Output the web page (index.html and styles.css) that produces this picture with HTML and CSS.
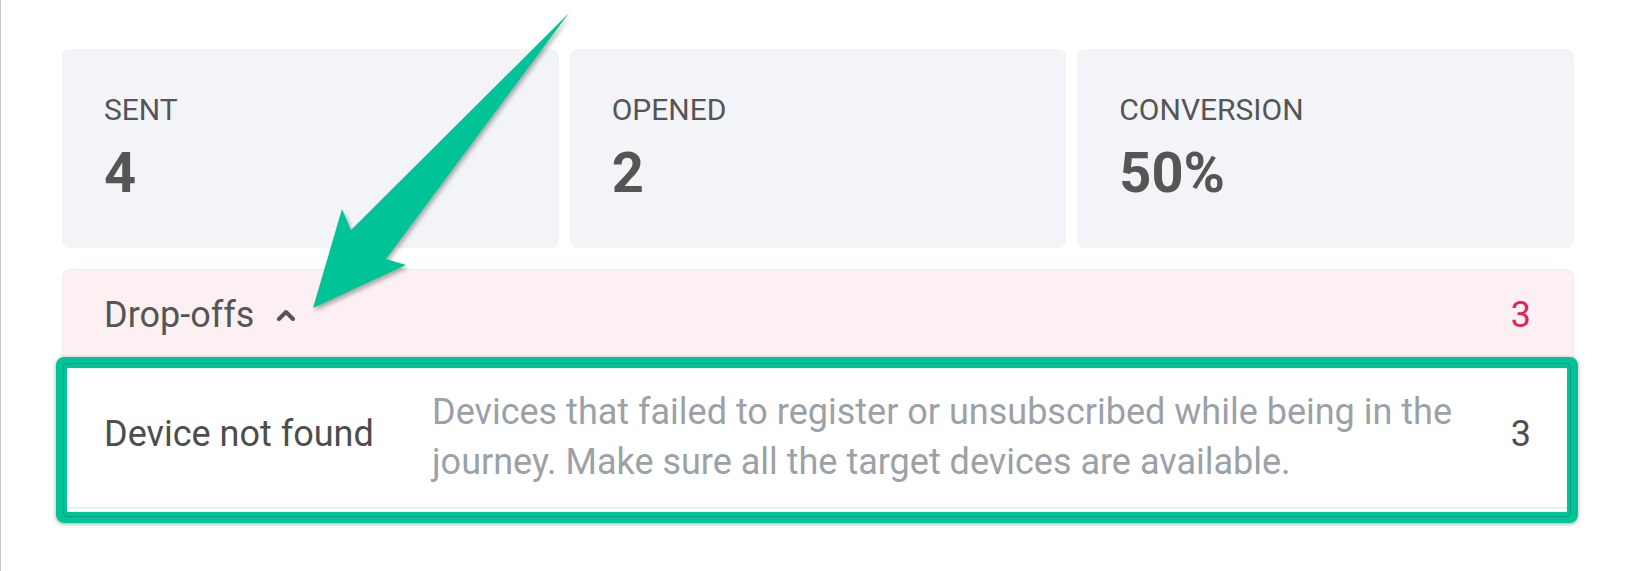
FILE: index.html
```html
<!DOCTYPE html>
<html lang="en">
<head>
    <meta charset="UTF-8">
    <meta name="viewport" content="width=device-width, initial-scale=1.0">
    <title>Journey stats - Drop-offs</title>
    <link rel="stylesheet" href="styles.css">
</head>
<body>

    <div class="page">
        <div class="stats">
            <div class="stat">
                <div class="stat-label">SENT</div>
                <div class="stat-value">4</div>
            </div>
            <div class="stat">
                <div class="stat-label">OPENED</div>
                <div class="stat-value">2</div>
            </div>
            <div class="stat">
                <div class="stat-label">CONVERSION</div>
                <div class="stat-value">50%</div>
            </div>
        </div>

        <div class="dropoffs">
            <div class="dropoffs-head">
                <span class="dropoffs-title">
                    Drop-offs
                    <svg class="chevron" width="20" height="12" viewBox="0 0 20 12">
                        <polyline points="3,10 10,3 17,10" fill="none" stroke="#555" stroke-width="4" stroke-linecap="round" stroke-linejoin="round"/>
                    </svg>
                </span>
                <span class="dropoffs-total">3</span>
            </div>
            <div class="dropoff-row">
                <div class="dropoff-name">Device not found</div>
                <div class="dropoff-desc">Devices that failed to register or unsubscribed while being in the journey. Make sure all the target devices are available.</div>
                <div class="dropoff-count">3</div>
            </div>
        </div>
    </div>

    <!-- annotations drawn over the screenshot -->
    <div class="mark-box"></div>
    <svg class="mark-arrow" width="1632" height="571" viewBox="0 0 1632 571">
        <polygon points="569,13 386,259 406,265 313,308 342,209 351,230" fill="#00c497"/>
    </svg>

</body>
</html>
```

FILE: styles.css
```css
body {
    margin: 0;
    min-height: 571px;
    background-color: #ffffff;
    border-left: 1px solid #c6c6c6;
    font-family: Roboto, "Liberation Sans", sans-serif;
    color: #555555;
}

.page {
    padding: 49px 0 0 61px;
    width: 1512px;
}

.stats {
    display: grid;
    grid-template-columns: 1fr 1fr 1fr;
    gap: 11px;
}

.stat {
    background-color: #f3f4f8;
    border-radius: 8px;
    padding: 43px 42px 40px 42px;
}

.stat-label {
    font-size: 30px;
    line-height: 36px;
    color: #555555;
}

.stat-value {
    margin-top: 10px;
    font-size: 56px;
    line-height: 70px;
    font-weight: bold;
    color: #555555;
}

.dropoffs {
    margin-top: 21px;
    border: 1px solid #ebebf3;
    border-radius: 8px;
    overflow: hidden;
    background-color: #ffffff;
}

.dropoffs-head {
    display: flex;
    justify-content: space-between;
    align-items: center;
    background-color: #fcf0f2;
    padding: 20px 42px 22px 41px;
    font-size: 36px;
    line-height: 50px;
}

.dropoffs-title {
    display: flex;
    align-items: center;
    gap: 22px;
    color: #555555;
}

.dropoffs-total {
    color: #e0245a;
}

.dropoff-row {
    display: grid;
    grid-template-columns: 328px 1fr auto;
    align-items: center;
    padding: 19px 42px 20px 41px;
    border-bottom: 1px solid #e9ecf1;
    font-size: 36px;
    line-height: 50px;
}

.dropoff-name {
    color: #4d4d4d;
}

.dropoff-desc {
    color: #9ca1a8;
    padding-top: 6px;
    padding-right: 40px;
}

.dropoff-count {
    color: #4d4d4d;
}

/* green highlight rectangle */
.mark-box {
    position: absolute;
    left: 56px;
    top: 357px;
    width: 1522px;
    height: 166px;
    box-sizing: border-box;
    border: 11px solid #00c497;
    border-radius: 8px;
    box-shadow: 0 1px 4px rgba(0, 0, 0, 0.35);
}

.mark-box::before {
    content: "";
    position: absolute;
    top: -5px;
    left: -4px;
    right: -4px;
    bottom: -5px;
    border: 1px solid rgba(0, 0, 0, 0.18);
    border-radius: 4px;
}

.mark-arrow {
    position: absolute;
    left: 0;
    top: 0;
    pointer-events: none;
    filter: drop-shadow(2px 3px 2px rgba(0, 0, 0, 0.3));
}
```
